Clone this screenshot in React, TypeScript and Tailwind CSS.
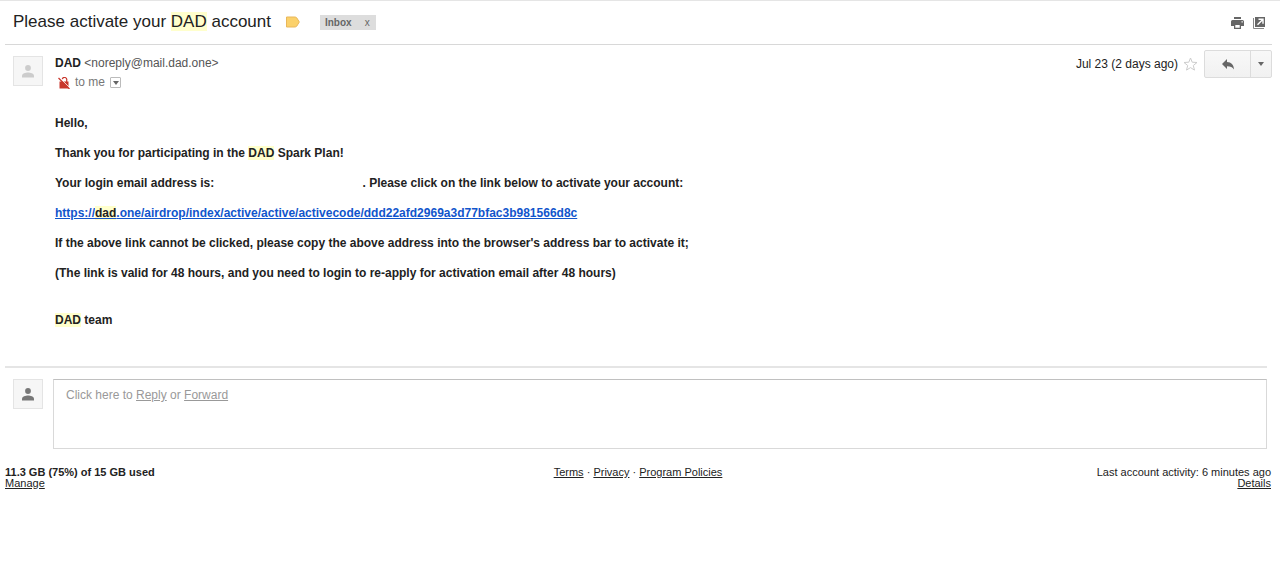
import type { ReactNode } from 'react';

function Mark({ children }: { children: ReactNode }) {
  return <mark className="bg-[#ffffcc] text-[#222222]">{children}</mark>;
}

function Avatar({ tone }: { tone: string }) {
  return (
    <div className="flex size-[30px] shrink-0 items-center justify-center border border-[#e4e4e4] bg-[#f6f6f6]">
      <svg viewBox="0 0 12 13" className={`h-[13px] w-3 ${tone}`} fill="currentColor" aria-hidden="true">
        <circle cx="6" cy="3" r="2.900" />
        <path d="M0 12.500v-1.800c0-2.200 3.600-3.300 6-3.300s6 1.100 6 3.300v1.800z" />
      </svg>
    </div>
  );
}

function NoEncryptionIcon() {
  return (
    <svg viewBox="0 0 12 12" className="size-3" aria-label="Not encrypted" role="img">
      <path d="M4.300 2.200a2.200 2.200 0 0 1 4.400 1V5" fill="none" stroke="#c9372c" strokeWidth="1.200" />
      <path d="M1.500 4.500h9V11.500h-9z" fill="#c9372c" />
      <path d="M1 .2 12 11.200" stroke="#fff" strokeWidth="1" />
      <path d="M.5 1 11.500 12" stroke="#c9372c" strokeWidth="1.300" />
    </svg>
  );
}

function PrintIcon() {
  return (
    <svg viewBox="0 0 13 12" className="h-3 w-[13px]" fill="#666" aria-hidden="true">
      <path d="M3 0h7v2H3z" />
      <path fillRule="evenodd" d="M1.500 3h10A1.500 1.500 0 0 1 13 4.500V9h-3V7H3v2H0V4.500A1.500 1.500 0 0 1 1.500 3zM10.500 4.200v1.200h1.300V4.200z" />
      <path fillRule="evenodd" d="M3 7h7v5H3zM4.300 8v2.800h4.400V8z" />
    </svg>
  );
}

function NewWindowIcon() {
  return (
    <svg viewBox="0 0 12 12" className="size-3" aria-hidden="true">
      <path d="M.5 1v10.500H11" fill="none" stroke="#888" />
      <path d="M2 0h10v10H2z" fill="#666" />
      <path d="M5.500 2.200H10v4.500M9.800 2.400 4.500 7.800" fill="none" stroke="#fff" strokeWidth="1.400" />
    </svg>
  );
}

function Caret() {
  return (
    <svg viewBox="0 0 6 4" className="h-1 w-1.5" fill="#666" aria-hidden="true">
      <path d="M0 0h6L3 4z" />
    </svg>
  );
}

export default function App() {
  return (
    <div className="border-t border-[#e5e5e5] bg-white font-['Liberation_Sans',Arial,sans-serif] text-[12px] leading-[15px] text-[#222222]">
      <header className="ml-[5px] mr-2 flex h-11 items-center border-b border-[#d8d8d8] pl-2 pr-[7px]">
        <h1 className="-mt-0.5 text-[17px] leading-5">
          Please activate your <Mark>DAD</Mark> account
        </h1>
        <button type="button" aria-label="Important" className="-mt-px ml-[15px]">
          <svg viewBox="0 0 14 12" className="h-3 w-3.5" aria-hidden="true">
            <path d="M.5 1h8.300q1.200 0 2 .9L13.300 6l-2.500 4.100q-.8.900-2 .9H.5z" fill="#fbd16b" stroke="#e9b75a" />
          </svg>
        </button>
        <div className="ml-5 flex h-[15px] items-center bg-[#dddddd] text-[10px] leading-[15px] text-[#666666]">
          <span className="px-[5px] font-bold">Inbox</span>
          <button type="button" aria-label="Remove label Inbox" className="pl-2 pr-[6px]">x</button>
        </div>
        <div className="ml-auto flex gap-[9px]">
          <button type="button" aria-label="Print all"><PrintIcon /></button>
          <button type="button" aria-label="Open in new window"><NewWindowIcon /></button>
        </div>
      </header>

      <main>
        <article className="ml-[5px] mr-[13px] border-b-2 border-[#e5e5e5] pb-[38px]">
          <div className="-mr-[5px] flex pl-2 pt-[5px]">
            <div className="pt-[6px]"><Avatar tone="text-[#cccccc]" /></div>
            <div className="ml-3 pt-[6px]">
              <p>
                <span className="font-bold">DAD</span>{' '}
                <span className="text-[#555555]">&lt;noreply@mail.dad.one&gt;</span>
              </p>
              <div className="mt-1 flex items-center pl-[3px] text-[#777777]">
                <NoEncryptionIcon />
                <span className="ml-[5px]">to me</span>
                <button type="button" aria-label="Show details" className="ml-[5px] flex size-[11px] items-center justify-center rounded-[1px] border border-[#bbbbbb]">
                  <Caret />
                </button>
              </div>
            </div>
            <div className="ml-auto flex h-[28px] items-center">
              <time>Jul 23 (2 days ago)</time>
              <button type="button" aria-label="Star" className="ml-[5px]">
                <svg viewBox="0 0 15 14" className="h-3.5 w-[15px]" aria-hidden="true">
                  <path d="m7.500 1 1.700 4.200 4.800.3-3.700 3 1.200 4.600-4-2.500-4 2.500 1.200-4.600L1 5.500l4.800-.3z" fill="none" stroke="#cccccc" />
                </svg>
              </button>
              <div className="ml-[6px] flex h-[28px] rounded-[2px] border border-[#dcdcdc] bg-linear-to-b from-[#f8f8f8] to-[#f1f1f1]">
                <button type="button" aria-label="Reply" className="flex w-[46px] items-center justify-center border-r border-[#dcdcdc]">
                  <svg viewBox="0 0 12 11" className="h-[11px] w-3" fill="#666" aria-hidden="true">
                    <path d="M5 0v3c4.300.2 6.700 2.800 7 7.500C10.500 8.200 8.500 7.200 5 7.200V10L0 5z" />
                  </svg>
                </button>
                <button type="button" aria-label="More" className="flex w-5 items-center justify-center"><Caret /></button>
              </div>
            </div>
          </div>

          <div className="ml-[50px] mt-[26px] space-y-[15px] font-bold">
            <p>Hello,</p>
            <p>Thank you for participating in the <Mark>DAD</Mark> Spark Plan!</p>
            <p>Your login email address is: <span className="inline-block w-[145px]" />. Please click on the link below to activate your account:</p>
            <p>
              <a href="https://dad.one/airdrop/index/active/active/activecode/ddd22afd2969a3d77bfac3b981566d8c" className="text-[#1155cc] underline">
                https://<Mark>dad</Mark>.one/airdrop/index/active/active/activecode/ddd22afd2969a3d77bfac3b981566d8c
              </a>
            </p>
            <p>If the above link cannot be clicked, please copy the above address into the browser's address bar to activate it;</p>
            <p>(The link is valid for 48 hours, and you need to login to re-apply for activation email after 48 hours)</p>
            <p className="pt-[17px]"><Mark>DAD</Mark> team</p>
          </div>
        </article>

        <section className="ml-[13px] mr-[13px] mt-[11px] flex gap-[10px]">
          <Avatar tone="text-[#777777]" />
          <div className="h-[70px] grow border border-[#d9d9d9] border-t-[#c0c0c0] px-3 py-2 text-[#999999]">
            Click here to <a href="#reply" className="underline">Reply</a> or <a href="#forward" className="underline">Forward</a>
          </div>
        </section>
      </main>

      <footer className="ml-[5px] mr-[9px] mt-[18px] grid grid-cols-3 text-[11px] leading-[11px]">
        <div>
          <p className="font-bold">11.3 GB (75%) of 15 GB used</p>
          <a href="#manage" className="block underline">Manage</a>
        </div>
        <p className="text-center">
          <a href="#terms" className="underline">Terms</a> · <a href="#privacy" className="underline">Privacy</a> · <a href="#policies" className="underline">Program Policies</a>
        </p>
        <div className="text-right">
          <p>Last account activity: 6 minutes ago</p>
          <a href="#details" className="block underline">Details</a>
        </div>
      </footer>
    </div>
  );
}
